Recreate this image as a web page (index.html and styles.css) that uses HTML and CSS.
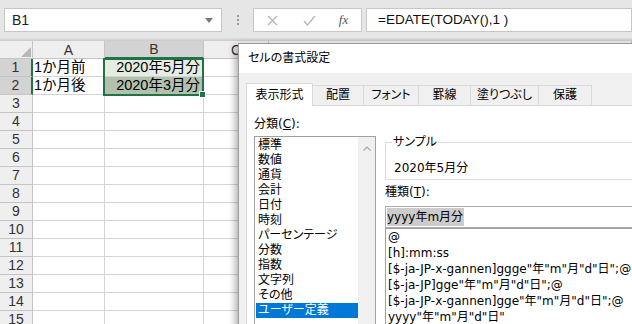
FILE: index.html
```html
<!DOCTYPE html>
<html lang="ja">
<head>
<meta charset="utf-8">
<title>セルの書式設定</title>
<link rel="stylesheet" href="styles.css">
</head>
<body>
<div class="app">
  <div class="toolbar">
    <div class="namebox">
      <span class="nb-text">B1</span>
      <svg class="nb-arrow" width="8" height="5" viewBox="0 0 8 5"><polygon points="0,0 8,0 4,5" fill="#7a7a7a"/></svg>
    </div>
    <div class="grip"><i></i><i></i><i></i></div>
    <div class="fxbox">
      <span class="fx-btn">
        <svg width="11" height="11" viewBox="0 0 11 11"><path d="M1 1 L10 10 M10 1 L1 10" stroke="#b4b4b4" stroke-width="1.2" fill="none"/></svg>
      </span>
      <span class="fx-btn">
        <svg width="13" height="11" viewBox="0 0 13 11"><path d="M1 6 L4.5 10 L12 1" stroke="#b4b4b4" stroke-width="1.2" fill="none"/></svg>
      </span>
      <span class="fx-btn fx-label">fx</span>
    </div>
    <div class="formula">=EDATE(TODAY(),1 )</div>
  </div>
  <div class="divider"></div>

  <div class="sheet">
    <div class="hdr corner"><svg width="10" height="10" viewBox="0 0 10 10"><polygon points="10,0 10,10 0,10" fill="#b8b8b8"/></svg></div>
    <div class="hdr colh">A</div>
    <div class="hdr colh sel">B</div>
    <div class="hdr colh">C</div>
    <div class="hdr colh">D</div>

    <div class="hdr rowh sel">1</div><div class="cell">1か月前</div><div class="cell num active">2020年5月分</div><div class="cell"></div><div class="cell"></div>
    <div class="hdr rowh sel">2</div><div class="cell">1か月後</div><div class="cell num selected">2020年3月分</div><div class="cell"></div><div class="cell"></div>
    <div class="hdr rowh">3</div><div class="cell"></div><div class="cell"></div><div class="cell"></div><div class="cell"></div>
    <div class="hdr rowh">4</div><div class="cell"></div><div class="cell"></div><div class="cell"></div><div class="cell"></div>
    <div class="hdr rowh">5</div><div class="cell"></div><div class="cell"></div><div class="cell"></div><div class="cell"></div>
    <div class="hdr rowh">6</div><div class="cell"></div><div class="cell"></div><div class="cell"></div><div class="cell"></div>
    <div class="hdr rowh">7</div><div class="cell"></div><div class="cell"></div><div class="cell"></div><div class="cell"></div>
    <div class="hdr rowh">8</div><div class="cell"></div><div class="cell"></div><div class="cell"></div><div class="cell"></div>
    <div class="hdr rowh">9</div><div class="cell"></div><div class="cell"></div><div class="cell"></div><div class="cell"></div>
    <div class="hdr rowh">10</div><div class="cell"></div><div class="cell"></div><div class="cell"></div><div class="cell"></div>
    <div class="hdr rowh">11</div><div class="cell"></div><div class="cell"></div><div class="cell"></div><div class="cell"></div>
    <div class="hdr rowh">12</div><div class="cell"></div><div class="cell"></div><div class="cell"></div><div class="cell"></div>
    <div class="hdr rowh">13</div><div class="cell"></div><div class="cell"></div><div class="cell"></div><div class="cell"></div>
    <div class="hdr rowh">14</div><div class="cell"></div><div class="cell"></div><div class="cell"></div><div class="cell"></div>
    <div class="hdr rowh">15</div><div class="cell"></div><div class="cell"></div><div class="cell"></div><div class="cell"></div>
  </div>

  <div class="selection"></div>
  <div class="fill-handle"></div>

  <div class="dialog">
    <div class="dlg-title">セルの書式設定</div>
    <div class="dlg-body">
      <div class="tabs">
        <div class="tab active w1">表示形式</div>
        <div class="tab w2">配置</div>
        <div class="tab w3">フォント</div>
        <div class="tab w4">罫線</div>
        <div class="tab w5">塗りつぶし</div>
        <div class="tab w6">保護</div>
      </div>
      <div class="page">
        <div class="left-col">
          <div class="label">分類(<u>C</u>):</div>
          <div class="listbox cat">
            <div class="items">
              <div class="item">標準</div>
              <div class="item">数値</div>
              <div class="item">通貨</div>
              <div class="item">会計</div>
              <div class="item">日付</div>
              <div class="item">時刻</div>
              <div class="item">パーセンテージ</div>
              <div class="item">分数</div>
              <div class="item">指数</div>
              <div class="item">文字列</div>
              <div class="item">その他</div>
              <div class="item picked">ユーザー定義</div>
            </div>
            <div class="scrollbar">
              <svg width="8" height="5" viewBox="0 0 8 5"><path d="M0.5 4.5 L4 1 L7.5 4.5" stroke="#a6a6a6" stroke-width="1.2" fill="none"/></svg>
            </div>
          </div>
        </div>
        <div class="right-col">
          <div class="group">
            <span class="legend">サンプル</span>
            <div class="sample">2020年5月分</div>
          </div>
          <div class="label type-label">種類(<u>T</u>):</div>
          <div class="input"><span class="hl">yyyy年m月分</span></div>
          <div class="listbox fmt">
            <div class="fitem">@</div>
            <div class="fitem">[h]:mm:ss</div>
            <div class="fitem">[$-ja-JP-x-gannen]ggge"年"m"月"d"日";@</div>
            <div class="fitem">[$-ja-JP]gge"年"m"月"d"日";@</div>
            <div class="fitem">[$-ja-JP-x-gannen]gge"年"m"月"d"日";@</div>
            <div class="fitem">yyyy"年"m"月"d"日"</div>
            <div class="fitem">yyyy"年"m"月";@</div>
          </div>
        </div>
      </div>
    </div>
  </div>
</div>
</body>
</html>
```

FILE: styles.css
```css
* { box-sizing: border-box; }
html, body { margin: 0; padding: 0; }
body {
  width: 632px;
  height: 324px;
  overflow: hidden;
  background: #ffffff;
  font-family: "Noto Sans CJK JP", "Noto Sans", sans-serif;
  color: #000;
}
.app { position: relative; width: 632px; height: 324px; overflow: hidden; }

/* ---------- toolbar ---------- */
.toolbar {
  height: 38px;
  background: #e6e6e6;
  display: flex;
  align-items: flex-start;
  padding-top: 8px;
}
.namebox {
  margin-left: 4px;
  width: 218px;
  height: 24px;
  background: #fff;
  border: 1px solid #c6c6c6;
  display: flex;
  align-items: center;
  justify-content: space-between;
  padding: 0 8px 0 7px;
  font-family: "Liberation Sans", sans-serif;
  font-size: 14px;
  color: #222;
}
.grip {
  width: 31px;
  height: 24px;
  display: flex;
  flex-direction: column;
  align-items: center;
  justify-content: center;
  gap: 2px;
}
.grip i { display: block; width: 2px; height: 2px; background: #9a9a9a; }
.fxbox {
  width: 109px;
  height: 24px;
  background: #fff;
  border: 1px solid #c6c6c6;
  display: grid;
  grid-template-columns: 36px 38px 1fr;
  align-items: center;
}
.fx-btn { display: flex; justify-content: center; align-items: center; height: 22px; }
.fx-label {
  font-family: "Liberation Serif", serif;
  font-style: italic;
  font-size: 13px;
  color: #555;
  padding-right: 2px;
}
.formula {
  margin-left: 4px;
  flex: 1;
  height: 24px;
  background: #fff;
  border: 1px solid #c6c6c6;
  padding-left: 11px;
  font-family: "Liberation Sans", sans-serif;
  font-size: 13.5px;
  line-height: 22px;
  color: #111;
  white-space: nowrap;
}
.divider {
  height: 3px;
  background: linear-gradient(to bottom, #e2e2e2, #c9c9c9);
}

/* ---------- sheet ---------- */
.sheet {
  display: grid;
  grid-template-columns: 33px 72px 99px 65px 1fr;
  grid-auto-rows: 18px;
  font-family: "Liberation Sans", "Noto Sans CJK JP", sans-serif;
}
.hdr, .cell {
  border-right: 1px solid #d4d4d4;
  border-bottom: 1px solid #d4d4d4;
}
.hdr {
  background: #efefef;
  border-color: #c4c4c4;
  font-size: 14px;
  color: #333;
  display: flex;
  align-items: center;
  justify-content: center;
  line-height: 17px;
}
.corner { justify-content: flex-end; align-items: flex-end; padding: 0 1px 1px 0; }
.colh { padding-top: 1px; }
.colh.sel { background: #d3d3d3; border-bottom: 2px solid #217346; }
.rowh.sel { background: #d3d3d3; border-right: 2px solid #217346; }
.cell {
  font-size: 14.5px;
  line-height: 17px;
  padding-left: 1px;
  white-space: nowrap;
  overflow: hidden;
}
.cell.num { text-align: right; padding-right: 3px; }
.cell.active { background: #e5ede2; }
.cell.selected { background: #b2c0ae; }

.selection {
  position: absolute;
  left: 103px;
  top: 58px;
  width: 101px;
  height: 38px;
  border: 2px solid #217346;
}
.fill-handle {
  position: absolute;
  left: 199px;
  top: 91px;
  width: 7px;
  height: 7px;
  background: #217346;
  border: 1px solid #fff;
}

/* ---------- dialog ---------- */
.dialog {
  position: absolute;
  left: 238px;
  top: 43px;
  width: 420px;
  height: 300px;
  background: #f0f0f0;
  border: 1px solid #9a9a9a;
  box-shadow: -3px 2px 7px rgba(0, 0, 0, 0.3);
  font-family: "DejaVu Sans", "Noto Sans CJK JP", sans-serif;
  font-size: 12px;
  font-feature-settings: "palt";
}
.dlg-title {
  height: 29px;
  background: #fff;
  padding-left: 9px;
  line-height: 29px;
  font-size: 12px;
}
.dlg-body { padding: 10px 0 0 7px; }
.tabs {
  display: flex;
  align-items: flex-end;
  height: 22px;
  position: relative;
  z-index: 1;
}
.tab {
  height: 20px;
  border: 1px solid #d9d9d9;
  border-bottom: none;
  background: #f0f0f0;
  margin-left: -1px;
  text-align: center;
  line-height: 19px;
  font-size: 12px;
}
.tab.active {
  margin-left: 0;
  height: 23px;
  margin-bottom: -1px;
  background: #fff;
  line-height: 22px;
}
.w1 { width: 67px; }
.w2 { width: 52px; }
.w3 { width: 56px; }
.w4 { width: 53px; }
.w5 { width: 69px; }
.w6 { width: 54px; }

.page {
  background: #fff;
  border: 1px solid #d9d9d9;
  height: 240px;
  display: flex;
  padding: 0 0 0 7px;
}
.label { line-height: 16px; font-size: 12px; }
.left-col .label { margin-top: 10px; margin-bottom: 4px; }
.listbox { border: 1px solid #a0a0a0; background: #fff; }
.listbox.cat {
  width: 122px;
  height: 200px;
  display: flex;
  padding: 1px 0 0 1px;
}
.items { flex: 1; }
.item { line-height: 15px; height: 15px; padding-left: 2px; white-space: nowrap; }
.item.picked { background: #0078d7; color: #fff; }
.scrollbar {
  width: 17px;
  margin-top: -1px;
  background: #f0f0f0;
  display: flex;
  justify-content: center;
  align-items: flex-start;
  padding-top: 9px;
}

.right-col { margin-left: 9px; flex: 1; padding-top: 36px; }
.group {
  position: relative;
  border: 1px solid #dcdcdc;
  padding: 17px 0 3px 8px;
  margin-right: -20px;
}
.legend {
  position: absolute;
  left: 6px;
  top: -9px;
  background: #fff;
  padding: 0 1px;
  line-height: 16px;
}
.sample { line-height: 16px; }
.type-label { margin-top: 4px; margin-bottom: 6px; }
.input {
  height: 22px;
  border: 1px solid #ababab;
  padding: 1px 0 0 1px;
  margin-right: -20px;
}
.hl { background: #cccccc; line-height: 18px; display: inline-block; padding-right: 1px; }
.listbox.fmt {
  margin-top: 0;
  height: 140px;
  margin-right: -20px;
  padding-left: 2px;
}
.fitem { line-height: 16px; height: 16px; white-space: nowrap; }
```
